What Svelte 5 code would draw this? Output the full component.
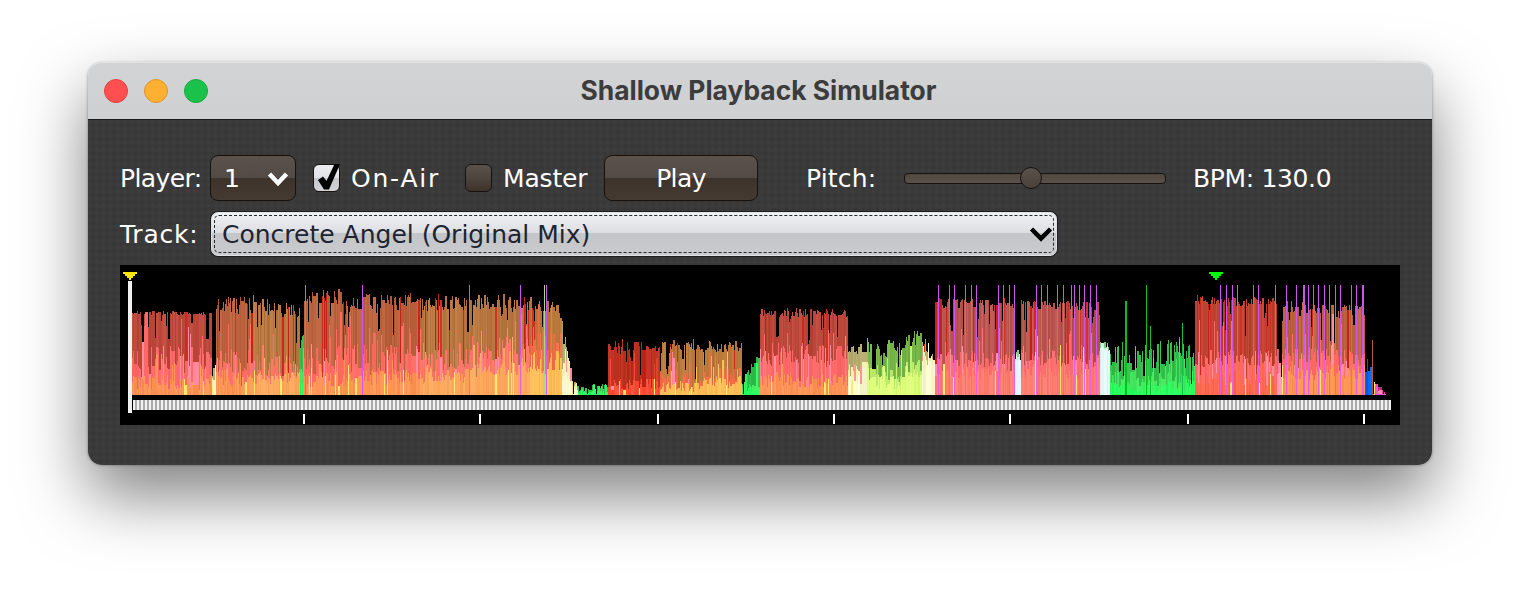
<script>
  function rng(seed) {
    let a = seed;
    return () => {
      a |= 0; a = (a + 0x6d2b79f5) | 0;
      let t = Math.imul(a ^ (a >>> 15), 1 | a);
      t = (t + Math.imul(t ^ (t >>> 7), 61 | t)) ^ t;
      return ((t ^ (t >>> 14)) >>> 0) / 4294967296;
    };
  }
  const P = {
    red: [[188, 72, 60], [255, 104, 104], [255, 148, 88]],
    orange: [[186, 98, 62], [255, 108, 100], [255, 150, 86]],
    olive: [[184, 118, 64], [255, 118, 104], [255, 168, 94]],
    dark: [[188, 48, 32], [225, 70, 50], [255, 78, 56]],
    amber: [[186, 120, 58], [240, 110, 72], [255, 190, 88]],
    brick: [[188, 66, 50], [255, 106, 104], [255, 104, 78]],
    green: [[52, 190, 78], [70, 232, 96], [44, 255, 96]],
    lime: [[116, 180, 70], [190, 236, 110], [220, 255, 122]],
    pale: [[180, 170, 110], [240, 240, 170], [248, 250, 205]],
    rose: [[186, 84, 78], [255, 108, 110], [255, 126, 112]],
    mint: [[120, 200, 130], [205, 240, 230], [225, 245, 248]],
    pink: [[200, 100, 130], [255, 130, 170], [255, 150, 190]],
    blue: [[24, 90, 220], [10, 100, 255], [0, 110, 255]],
    magenta: [[200, 50, 150], [255, 60, 190], [255, 80, 200]]
  };
  // x from, x to, top y at start, top y at end, jitter, mid y, mid jitter, low y, low jitter, palette
  const SEGS = [
    [132, 212, 313, 313, 2, 358, 12, 382, 8, 'red'],
    [212, 216, 376, 362, 3, 378, 5, 384, 4, 'pale'],
    [216, 250, 303, 300, 8, 362, 13, 378, 9, 'orange'],
    [250, 300, 301, 312, 7, 366, 13, 378, 8, 'olive'],
    [300, 304, 346, 332, 4, 372, 4, 382, 3, 'green'],
    [304, 345, 298, 298, 9, 360, 14, 380, 8, 'orange'],
    [345, 380, 306, 300, 8, 358, 14, 378, 8, 'orange'],
    [380, 420, 300, 300, 8, 358, 13, 378, 8, 'orange'],
    [420, 470, 303, 303, 9, 356, 14, 376, 8, 'olive'],
    [470, 530, 300, 302, 8, 350, 15, 370, 8, 'olive'],
    [530, 562, 303, 311, 7, 346, 15, 366, 8, 'amber'],
    [562, 572, 322, 372, 3, 350, 14, 376, 6, 'pale'],
    [572, 578, 380, 385, 2, 385, 3, 390, 2, 'pale'],
    [578, 608, 388, 386, 3, 391, 3, 393, 2, 'green'],
    [608, 660, 345, 346, 6, 388, 5, 384, 6, 'dark'],
    [660, 700, 346, 345, 6, 376, 7, 386, 6, 'amber'],
    [700, 742, 347, 346, 6, 374, 8, 382, 6, 'amber'],
    [742, 760, 384, 354, 5, 385, 4, 390, 3, 'green'],
    [760, 848, 313, 312, 5, 354, 12, 380, 8, 'red'],
    [848, 868, 352, 345, 8, 370, 8, 380, 6, 'pale'],
    [868, 905, 348, 345, 11, 372, 9, 382, 7, 'lime'],
    [905, 922, 345, 335, 9, 366, 7, 372, 6, 'lime'],
    [922, 935, 340, 360, 7, 354, 6, 364, 4, 'pale'],
    [935, 1015, 303, 303, 5, 358, 8, 372, 8, 'rose'],
    [1015, 1021, 352, 352, 2, 356, 2, 360, 1, 'mint'],
    [1021, 1100, 305, 306, 5, 358, 8, 372, 8, 'rose'],
    [1100, 1110, 340, 348, 4, 348, 3, 350, 3, 'mint'],
    [1110, 1195, 358, 350, 15, 379, 8, 386, 6, 'green'],
    [1195, 1277, 300, 302, 5, 358, 9, 378, 8, 'brick'],
    [1277, 1282, 352, 350, 3, 362, 4, 372, 3, 'pink'],
    [1282, 1365, 306, 310, 6, 356, 9, 372, 8, 'orange'],
    [1370, 1378, 380, 384, 1, 384, 1, 386, 1, 'magenta'],
    [1378, 1386, 386, 393, 1, 390, 1, 394, 1, 'magenta']
  ];
  const R = rng(20240);
  const rgb = (c, j) => {
    const d = (R() - 0.5) * j;
    return `rgb(${c.map((v) => Math.max(0, Math.min(255, Math.round(v + d)))).join(',')})`;
  };
  const BASE = 395, OX = 120, OY = 265;
  const bars = [];
  const push = (x, y, w, fill) => bars.push({ x: x - OX, y: y - OY, w, h: BASE - y, fill });
  for (const [a, b, t0, t1, tv, m, mv, l, lv, name] of SEGS) {
    const p = P[name];
    const warm = name !== 'green' && name !== 'lime' && name !== 'mint';
    let top = t0, mid = m, low = l, c0 = rgb(p[0], 20), c1 = rgb(p[1], 14), c2 = rgb(p[2], 16);
    for (let x = a; x < b; x++) {
      const f = (x - a) / Math.max(1, b - a - 1);
      if (R() < 0.82) {
        top = t0 + (t1 - t0) * f + (R() - 0.5) * 2 * tv;
        if (R() < 0.16) top += 5 + R() * 26;
        mid = m + (R() - 0.5) * 2 * mv;
        if (R() < 0.13) mid -= 8 + R() * 30;
        if (R() < 0.1) mid += 8 + R() * 10;
        low = l + (R() - 0.5) * 2 * lv;
        if (R() < 0.12) low -= 6 + R() * 22;
        c0 = rgb(R() < 0.1 && warm ? [200, 40, 30] : p[0], 20);
        c1 = rgb(R() < 0.12 && warm ? [255, 140, 160] : p[1], 14);
        c2 = rgb(R() < 0.06 && warm ? [255, 230, 110] : p[2], 18);
      }
      push(x, Math.min(BASE - 1, Math.round(top)), 1, c0);
      push(x, Math.min(BASE - 1, Math.max(Math.round(top), Math.round(mid))), 1, c1);
      push(x, Math.min(BASE - 1, Math.max(Math.round(top), Math.round(low))), 1, c2);
    }
  }
  const beatLines = [938, 949, 954, 965, 971, 976, 998, 1003, 1009, 1014, 1036, 1041, 1047, 1057, 1063, 1071, 1074, 1079, 1084, 1090, 1096, 1220, 1226, 1232, 1237, 1253, 1258, 1275, 1286, 1296, 1303, 1304, 1308, 1313, 1318, 1324, 1329, 1335, 1340, 1351, 1356, 1362, 1363, 469, 520, 546];
  for (const x of beatLines) {
    bars.push({ x: x - OX, y: 20, w: 1, h: BASE - 285, fill: 'rgb(205,85,235)' });
    bars.push({ x: x - OX, y: 355 - OY, w: 1, h: 40, fill: 'rgb(232,95,225)' });
  }
  push(305, 285, 1, 'rgb(195,100,235)');
  push(362, 285, 1, 'rgb(205,85,235)');
  push(544, 285, 1, 'rgb(170,215,130)');
  push(1125, 301, 2, 'rgb(10,190,30)');
  push(1146, 285, 1, 'rgb(10,190,30)');
  push(1150, 326, 1, 'rgb(20,190,50)');
  push(1182, 323, 1, 'rgb(20,190,70)');
  push(1365, 372, 2, 'rgb(10,90,240)');
  push(1367, 359, 1, 'rgb(24,80,200)');
  push(1368, 371, 2, 'rgb(10,100,255)');
  push(1370, 367, 2, 'rgb(20,110,250)');
  push(1369, 380, 3, 'rgb(0,110,255)');
  push(1372, 340, 1, 'rgb(185,90,60)');

  const stripes = [];
  for (let x = 133; x < 1391; x += 4) stripes.push(x - OX);
  const ticks = [304, 480, 658, 834, 1010, 1188, 1364].map((x) => x - OX);
</script>

<div class="window">
  <header class="titlebar">
    <div class="lights">
      <span class="light close"></span>
      <span class="light min"></span>
      <span class="light max"></span>
    </div>
    <h1>Shallow Playback Simulator</h1>
  </header>

  <main class="content">
    <div class="row first">
      <span class="label w-player">Player:</span>
      <div class="combo dark player">
        <span>1</span>
        <svg class="chev" width="22" height="15" viewBox="0 0 22 15"><path d="M2.5 3 L11 12 L19.5 3" /></svg>
      </div>
      <div class="check on">
        <svg class="tick" width="24" height="30" viewBox="0 0 24 30"><path d="M1 17 L6 13.5 L9.5 18 L17.5 1 L23 1 L12 26.5 L7 26.5 Z" /></svg>
      </div>
      <span class="label w-onair">On-Air</span>
      <div class="check"></div>
      <span class="label w-master">Master</span>
      <button class="play">Play</button>
      <span class="label w-pitch">Pitch:</span>
      <div class="slider"><span class="thumb"></span></div>
      <span class="label bpm">BPM: 130.0</span>
    </div>

    <div class="row second">
      <span class="label w-track">Track:</span>
      <div class="combo bright track">
        <span>Concrete Angel (Original Mix)</span>
        <svg class="chev" width="24" height="16" viewBox="0 0 24 16"><path d="M2.5 3 L12 12.5 L21.5 3" /></svg>
      </div>
    </div>

    <svg class="wave" width="1280" height="160" viewBox="0 0 1280 160" shape-rendering="crispEdges">
      <rect width="1280" height="160" fill="#000" />
      {#each bars as b}
        <rect x={b.x} y={b.y} width={b.w} height={b.h} fill={b.fill} />
      {/each}
      <rect x="13" y="135" width="1258" height="10" fill="#aaa" />
      {#each stripes as s}
        <rect x={s} y="135" width="2" height="10" fill="#f2f2f2" />
      {/each}
      {#each ticks as t}
        <rect x={t - 1} y="149" width="2" height="10" fill="#fff" />
      {/each}
      <rect x="8" y="16" width="4" height="132" fill="#f0f0f0" />
      <path d="M3 7h14v2h-2v2h-2v2h-2v2h-2v-2h-2v-2h-2v-2h-2z" fill="#ffe800" />
      <path d="M1089 7h14v2h-2v2h-2v2h-2v2h-2v-2h-2v-2h-2v-2h-2z" fill="#00ff00" />
    </svg>
  </main>
</div>

<style>
  :global(html), :global(body) {
    margin: 0;
    height: 600px;
    overflow: hidden;
    background: #fff;
  }
  .window {
    width: 1344px;
    height: 402px;
    margin: 63px 0 0 88px;
    border-radius: 14px;
    display: flex;
    flex-direction: column;
    box-shadow: 0 30px 66px rgba(0, 0, 0, 0.5), 0 0 3px rgba(0, 0, 0, 0.4);
  }
  .titlebar {
    height: 56px;
    flex: none;
    display: flex;
    align-items: center;
    justify-content: center;
    position: relative;
    background: linear-gradient(#d2d3d5, #cfd0d2);
    border-top: 1px solid #e2e3e4;
    border-bottom: 1px solid #1c1c1c;
    border-radius: 14px 14px 0 0;
    margin-top: -1px;
  }
  .lights {
    position: absolute;
    left: 16px;
    top: 16px;
    display: flex;
    gap: 16px;
  }
  .light {
    width: 24px;
    height: 24px;
    border-radius: 50%;
    box-sizing: border-box;
    border: 1px solid;
  }
  .close { background: #ff4f51; border-color: #e5403f; }
  .min { background: #ffb030; border-color: #e0962a; }
  .max { background: #1ac24a; border-color: #15a83e; }
  h1 {
    margin: 0 3px 3px 0;
    font: 700 26.4px Inter, "Liberation Sans", sans-serif;
    color: #3c3c3c;
  }
  .content {
    flex: 1;
    box-sizing: border-box;
    padding: 35px 32px 0;
    border-radius: 0 0 14px 14px;
    background-color: #3a3a3a;
    background-image:
      radial-gradient(circle at 25% 25%, #3e3e3e 0 1.2px, transparent 1.6px),
      radial-gradient(circle at 75% 75%, #363636 0 1.2px, transparent 1.6px);
    background-size: 7px 7px;
  }
  .row {
    display: flex;
    align-items: center;
    height: 46px;
  }
  .second {
    height: 44px;
    margin-top: 11px;
  }
  .label {
    font: 400 25px "DejaVu Sans", sans-serif;
    color: #fff;
    white-space: nowrap;
    flex: none;
  }
  .w-player { width: 90px; letter-spacing: -0.6px; }
  .w-onair { width: 114px; margin-left: 11px; letter-spacing: 1.8px; }
  .w-master { width: 101px; margin-left: 11px; letter-spacing: -0.15px; }
  .w-pitch { width: 98px; margin-left: 48px; letter-spacing: 0.2px; }
  .w-track { width: 91px; letter-spacing: 0.75px; }
  .bpm { margin-left: 27px; letter-spacing: -0.35px; }
  .combo {
    box-sizing: border-box;
    display: flex;
    align-items: center;
    justify-content: space-between;
    flex: none;
    position: relative;
    font: 400 25px "DejaVu Sans", sans-serif;
  }
  .chev { fill: none; flex: none; }
  .chev path { fill: none; stroke-width: 4.5; }
  .dark {
    background: linear-gradient(#5b524c 0, #524a44 50%, #3e332b 50%, #453a32 100%);
    border: 1px solid #17120e;
    border-radius: 8px;
    color: #fff;
  }
  .dark .chev path { stroke: #fff; }
  .player {
    width: 86px;
    height: 46px;
    padding: 0 6px 0 13px;
  }
  .track {
    width: 846px;
    height: 44px;
    padding: 0 3px 0 10px;
    color: #1e2430;
    border: 1px solid #dfe0e3;
    border-radius: 7px;
    box-shadow: 0 0 0 1px #1c1e22;
    background: linear-gradient(#f0f1f4 0, #dcdee3 48%, #c3c5c9 48%, #c9cbce 100%);
  }
  .track::after {
    content: "";
    position: absolute;
    inset: 2px;
    border: 1px dashed #24272c;
    border-radius: 5px;
    pointer-events: none;
  }
  .track .chev path { stroke: #000; }
  .check {
    width: 27px;
    height: 28px;
    box-sizing: border-box;
    flex: none;
    position: relative;
    border: 1px solid #17120e;
    border-radius: 6px;
    background: linear-gradient(#5a514b 0, #4d443e 50%, #3e332b 100%);
  }
  .on {
    margin-left: 17px;
    background: linear-gradient(#ecedf1 0, #e0e2e7 50%, #c4c7ca 50%, #d2d4d7 100%);
  }
  .tick {
    position: absolute;
    left: 3px;
    top: -2px;
  }
  .tick path { fill: #000; }
  button.play {
    width: 154px;
    height: 46px;
    flex: none;
    padding: 0;
    font: 400 25px "DejaVu Sans", sans-serif;
    letter-spacing: -0.6px;
    color: #fff;
    border: 1px solid #17120e;
    border-radius: 8px;
    background: linear-gradient(#5b524c 0, #524a44 50%, #3e332b 50%, #453a32 100%);
  }
  .slider {
    width: 262px;
    height: 11px;
    box-sizing: border-box;
    flex: none;
    position: relative;
    border: 1px solid #17120e;
    border-radius: 4px;
    background: linear-gradient(#50473f, #5a514a);
  }
  .thumb {
    position: absolute;
    left: 115px;
    top: -7px;
    width: 22px;
    height: 22px;
    box-sizing: border-box;
    border-radius: 50%;
    border: 1px solid #17120e;
    background: linear-gradient(#5a514b, #4a413a);
  }
  .wave {
    display: block;
    margin-top: 9px;
  }
</style>
